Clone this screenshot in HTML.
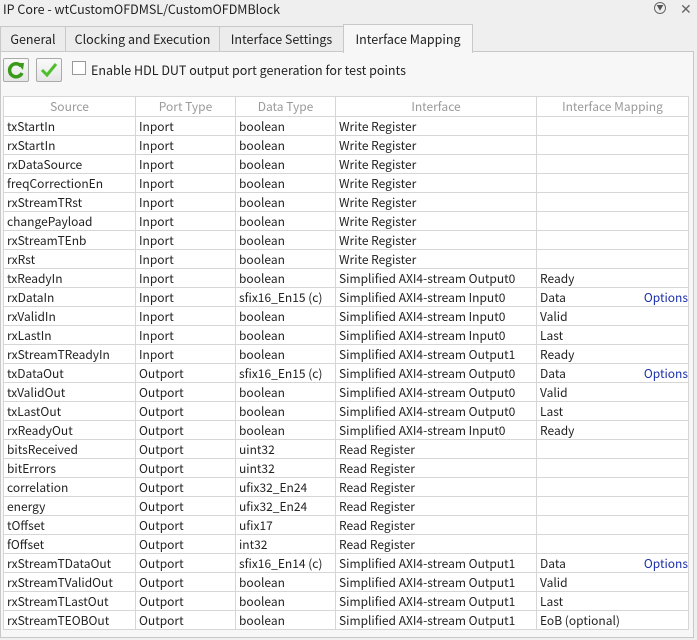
<!DOCTYPE html><html><head><style>
*{box-sizing:border-box}
body{margin:0;width:697px;height:640px;background:#efefef;font-family:"Noto Sans CJK SC","Liberation Sans",sans-serif;font-size:12px;color:#222;position:relative;overflow:hidden}
.t{position:absolute;left:3px;top:0;line-height:18px;font-size:12.5px}
.tab{position:absolute;top:26px;height:26px;border:1px solid #c8c8c8;background:#ececec;line-height:24px;text-align:center;font-size:12.5px}
.panel{position:absolute;left:0;top:51px;width:694px;height:587px;border:1px solid #c8c8c8;background:#f7f7f7}
.btn{position:absolute;top:58px;width:26px;height:24px;border:1px solid #aaa;border-radius:2px;background:linear-gradient(#fafafa,#e6e6e6)}
table{position:absolute;left:3px;top:96px;border-collapse:collapse;background:#fff;table-layout:fixed;width:685px}
td,th{border:1px solid #d6d6d6;height:19px;padding:0 3px;white-space:nowrap;overflow:hidden;font-weight:normal;line-height:17px}
th{color:#999;background:#fff;height:20px}
.o{float:right;color:#1a2faa;margin-right:-3px}
</style></head><body>
<div class="t">IP Core - wtCustomOFDMSL/CustomOFDMBlock</div>
<div style="position:absolute;left:654px;top:2px;width:12px;height:12px;border:1px solid #666;border-radius:50%;font-size:7px;line-height:10px;text-align:center;color:#555">▼</div>
<div style="position:absolute;left:680px;top:-1px;font-size:14px;color:#666">✕</div>
<div class="panel"></div>
<div class="tab" style="left:0;width:66px">General</div>
<div class="tab" style="left:65px;width:155px">Clocking and Execution</div>
<div class="tab" style="left:219px;width:125px">Interface Settings</div>
<div class="tab" style="left:343px;top:24px;height:29px;width:130px;background:#f7f7f7;border-bottom:none;line-height:28px">Interface Mapping</div>
<div class="btn" style="left:3px"><svg width="24" height="22" viewBox="0 0 24 22"><path d="M17 7 A6.5 6.5 0 1 0 18 14" fill="none" stroke="#3a9a1a" stroke-width="3.5"/><path d="M13 4 L20 4 L19 11 Z" fill="#3a9a1a"/></svg></div>
<div class="btn" style="left:36px"><svg width="24" height="22" viewBox="0 0 24 22"><path d="M5 11 L10 16 L19 5" fill="none" stroke="#4cbf2a" stroke-width="3"/></svg></div>
<div style="position:absolute;left:72px;top:61px;width:14px;height:14px;border:1px solid #999;background:#fff"></div>
<div style="position:absolute;left:91px;top:60px;font-size:12.5px">Enable HDL DUT output port generation for test points</div>
<table>
<colgroup><col style="width:132px"><col style="width:100px"><col style="width:100px"><col style="width:201px"><col style="width:152px"></colgroup>
<tr><th>Source</th><th>Port Type</th><th>Data Type</th><th>Interface</th><th>Interface Mapping</th></tr>
<tr><td>txStartIn</td><td>Inport</td><td>boolean</td><td>Write Register</td><td></td></tr>
<tr><td>rxStartIn</td><td>Inport</td><td>boolean</td><td>Write Register</td><td></td></tr>
<tr><td>rxDataSource</td><td>Inport</td><td>boolean</td><td>Write Register</td><td></td></tr>
<tr><td>freqCorrectionEn</td><td>Inport</td><td>boolean</td><td>Write Register</td><td></td></tr>
<tr><td>rxStreamTRst</td><td>Inport</td><td>boolean</td><td>Write Register</td><td></td></tr>
<tr><td>changePayload</td><td>Inport</td><td>boolean</td><td>Write Register</td><td></td></tr>
<tr><td>rxStreamTEnb</td><td>Inport</td><td>boolean</td><td>Write Register</td><td></td></tr>
<tr><td>rxRst</td><td>Inport</td><td>boolean</td><td>Write Register</td><td></td></tr>
<tr><td>txReadyIn</td><td>Inport</td><td>boolean</td><td>Simplified AXI4-stream Output0</td><td>Ready</td></tr>
<tr><td>rxDataIn</td><td>Inport</td><td>sfix16_En15 (c)</td><td>Simplified AXI4-stream Input0</td><td>Data<span class="o">Options</span></td></tr>
<tr><td>rxValidIn</td><td>Inport</td><td>boolean</td><td>Simplified AXI4-stream Input0</td><td>Valid</td></tr>
<tr><td>rxLastIn</td><td>Inport</td><td>boolean</td><td>Simplified AXI4-stream Input0</td><td>Last</td></tr>
<tr><td>rxStreamTReadyIn</td><td>Inport</td><td>boolean</td><td>Simplified AXI4-stream Output1</td><td>Ready</td></tr>
<tr><td>txDataOut</td><td>Outport</td><td>sfix16_En15 (c)</td><td>Simplified AXI4-stream Output0</td><td>Data<span class="o">Options</span></td></tr>
<tr><td>txValidOut</td><td>Outport</td><td>boolean</td><td>Simplified AXI4-stream Output0</td><td>Valid</td></tr>
<tr><td>txLastOut</td><td>Outport</td><td>boolean</td><td>Simplified AXI4-stream Output0</td><td>Last</td></tr>
<tr><td>rxReadyOut</td><td>Outport</td><td>boolean</td><td>Simplified AXI4-stream Input0</td><td>Ready</td></tr>
<tr><td>bitsReceived</td><td>Outport</td><td>uint32</td><td>Read Register</td><td></td></tr>
<tr><td>bitErrors</td><td>Outport</td><td>uint32</td><td>Read Register</td><td></td></tr>
<tr><td>correlation</td><td>Outport</td><td>ufix32_En24</td><td>Read Register</td><td></td></tr>
<tr><td>energy</td><td>Outport</td><td>ufix32_En24</td><td>Read Register</td><td></td></tr>
<tr><td>tOffset</td><td>Outport</td><td>ufix17</td><td>Read Register</td><td></td></tr>
<tr><td>fOffset</td><td>Outport</td><td>int32</td><td>Read Register</td><td></td></tr>
<tr><td>rxStreamTDataOut</td><td>Outport</td><td>sfix16_En14 (c)</td><td>Simplified AXI4-stream Output1</td><td>Data<span class="o">Options</span></td></tr>
<tr><td>rxStreamTValidOut</td><td>Outport</td><td>boolean</td><td>Simplified AXI4-stream Output1</td><td>Valid</td></tr>
<tr><td>rxStreamTLastOut</td><td>Outport</td><td>boolean</td><td>Simplified AXI4-stream Output1</td><td>Last</td></tr>
<tr><td>rxStreamTEOBOut</td><td>Outport</td><td>boolean</td><td>Simplified AXI4-stream Output1</td><td>EoB (optional)</td></tr>
</table>
</body></html>
